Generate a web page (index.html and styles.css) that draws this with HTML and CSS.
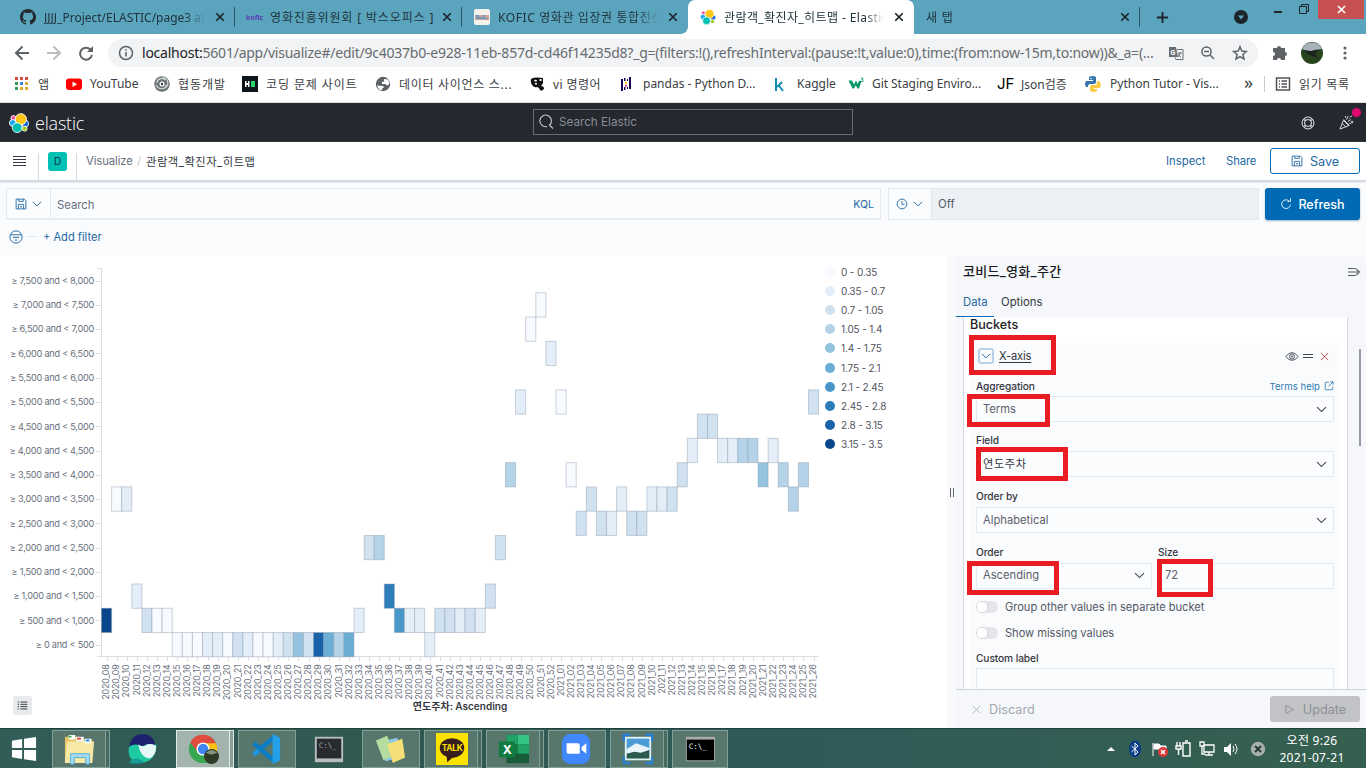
FILE: index.html
```html
<!DOCTYPE html>
<html lang="ko">
<head>
<meta charset="utf-8">
<title>관람객_확진자_히트맵 - Elastic</title>
<link rel="stylesheet" href="styles.css">
</head>
<body>
<svg width="0" height="0" class="defs">
  <symbol id="elastic" viewBox="0 0 32 32"><g stroke="#fff" stroke-width="1.4"><circle cx="7" cy="8" r="4" fill="#f04e98"/><circle cx="6" cy="16" r="5.4" fill="#1ba9f5"/><circle cx="26" cy="17" r="5.4" fill="#0b64dd"/><circle cx="25" cy="25" r="4" fill="#93c90e"/><circle cx="19" cy="10" r="9" fill="#fec514"/><circle cx="13" cy="23.500" r="7.800" fill="#00bfb3"/></g></symbol>
  <symbol id="down" viewBox="0 0 16 16"><path d="M2.500 5 8 10.500 13.500 5" fill="none" stroke="currentColor" stroke-width="1.300"/></symbol>
  <symbol id="close" viewBox="0 0 16 16"><path d="m3 3 10 10M13 3 3 13" fill="none" stroke="currentColor" stroke-width="2.300"/></symbol>
  <symbol id="thinx" viewBox="0 0 16 16"><path d="m1.500 1.500 13 13M14.500 1.500l-13 13" fill="none" stroke="currentColor" stroke-width="1.400"/></symbol>
  <symbol id="disk" viewBox="0 0 16 16"><path d="M2 1.500h10.500l2 2v11H1.500v-13H2m3 0v3h6v-3M4.500 14.500v-6h7v6M8 10.500v2m-1-1h2" fill="none" stroke="currentColor" stroke-width="1.200"/></symbol>
</svg>
<div class="screen">
  <div class="tabs">
    <div class="tab t1"><svg class="i16" viewBox="0 0 16 16"><path fill="#24292e" d="M8 0C3.580 0 0 3.580 0 8c0 3.540 2.290 6.530 5.470 7.590.4.070.55-.17.55-.38v-1.490c-2.230.48-2.690-.95-2.690-.95-.36-.92-.89-1.170-.89-1.170-.73-.5.050-.49.050-.49.8.060 1.230.83 1.230.83.71 1.220 1.870.87 2.330.66.070-.52.280-.87.5-1.070-1.770-.2-3.640-.89-3.640-3.950 0-.87.31-1.590.82-2.150-.08-.2-.36-1.020.08-2.120 0 0 .67-.21 2.200.82a7.600 7.600 0 0 1 4 0c1.530-1.040 2.200-.82 2.200-.82.44 1.100.160 1.920.080 2.120.51.56.82 1.270.82 2.150 0 3.070-1.870 3.750-3.650 3.950.29.25.54.73.54 1.480v2.200c0 .21.150.46.55.38A8 8 0 0 0 8 0"/></svg><span class="tt">JJJJ_Project/ELASTIC/page3 at</span><svg class="x"><use href="#close"/></svg></div>
    <div class="tab t2"><b class="kofic">kofic</b><span class="tt">영화진흥위원회 [ 박스오피스 ]</span><svg class="x"><use href="#close"/></svg></div>
    <div class="tab t3"><svg class="i16" viewBox="0 0 16 16"><rect width="16" height="16" rx="2" fill="#f5f2ed"/><path d="M1 6h14v5H1z" fill="#c9a49a"/><path d="M2 6h3v2h4V6h2v3h3v1H2" fill="#7896b5"/></svg><span class="tt">KOFIC 영화관 입장권 통합전산</span><svg class="x"><use href="#close"/></svg></div>
    <div class="tab t4 active"><svg class="i16"><use href="#elastic"/></svg><span class="tt">관람객_확진자_히트맵 - Elastic</span><svg class="x"><use href="#close"/></svg></div>
    <div class="tab t5"><span class="tt">새 탭</span><svg class="x"><use href="#close"/></svg></div>
    <svg class="plus" viewBox="0 0 14 14"><path d="M7 1v12M1 7h12" stroke="#1c2529" stroke-width="2"/></svg>
    <svg class="tri" viewBox="0 0 14 14"><circle cx="7" cy="7" r="7" fill="#1c2529"/><path d="M4 5.500h6L7 9.500z" fill="#5ba4be"/></svg>
    <svg class="winctl" viewBox="0 0 92 20"><path d="M1 12h8" stroke="#1c2529" stroke-width="2"/><path d="M26.500 6.500h7v7h-7zM28.500 6V4.500h7v7H34" fill="none" stroke="#1c2529"/><path fill="#c75050" d="M45 0h46v19H45z"/><path d="m65 6 7 7m0-7-7 7" stroke="#fff" stroke-width="1.700"/></svg>
  </div>
  <div class="toolbar">
    <svg class="nav" viewBox="0 0 86 16"><g fill="none" stroke-width="2"><path stroke="#5f6368" d="M15 8H2m6.500-6.500L2 8l6.500 6.500"/><path stroke="#babcbe" d="M33 8h13m-6.500-6.500L46 8l-6.500 6.500"/><path stroke="#5f6368" d="M76.500 4.500A6 6 0 1 0 78 10"/></g><path fill="#5f6368" d="M79 1v6h-6z"/></svg>
    <div class="omni"><svg class="i16" viewBox="0 0 16 16"><circle cx="8" cy="8" r="6.500" fill="none" stroke="#5f6368" stroke-width="1.500"/><path d="M8 7v4.500M8 4.200v1.600" stroke="#5f6368" stroke-width="1.600"/></svg><span class="url"><i>localhost:</i>5601/app/visualize#/edit/9c4037b0-e928-11eb-857d-cd46f14235d8?_g=(filters:!(),refreshInterval:(pause:!t,value:0),time:(from:now-15m,to:now))&amp;_a=(...</span>
      <svg class="omnii" viewBox="0 0 80 16"><path fill="#6a6e73" d="M1 2h7l2 10H1z"/><path d="M9 4.500h6v10H8l-1-2M10 8h4m-2-1v1c0 2-1 3-2 4m0-3c1 2 2 3 3 3" fill="none" stroke="#6a6e73"/><text x="2.500" y="10" class="gt">G</text><g fill="none" stroke="#5f6368" stroke-width="1.500"><circle cx="38.500" cy="6.500" r="4.600"/><path d="m42 10 4 4M36 6.500h5M72 1.800l1.800 4.300 4.600.4-3.500 3 1.100 4.500-4-2.400-4 2.400 1.100-4.500-3.500-3 4.600-.4z"/></g></svg></div>
    <svg class="ext" viewBox="0 0 82 24"><path fill="#5f6368" d="M3 7h3a2 2 0 1 1 4 0h4v4a2 2 0 1 1 0 4v4h-4a2 2 0 1 0-4 0H2v-4a2 2 0 1 0 0-4V7z"/><circle cx="41" cy="12" r="11" fill="#28441f"/><path d="M31 8a11 11 0 0 1 20 0l-8 1-4 2z" fill="#a9b2bd"/><path d="m32 9 8 1 9-1-5 3 3 5-6-2-4-2z" fill="#1c221e"/><g fill="#5f6368"><circle cx="74" cy="7" r="1.600"/><circle cx="74" cy="12" r="1.600"/><circle cx="74" cy="17" r="1.600"/></g></svg>
  </div>
  <div class="bookmarks">
    <div class="b1"><svg viewBox="0 0 16 16"><path fill="#d64a3f" d="M1 1h3v3H1zm5 0h3v3H6zm5 0h3v3h-3z"/><path fill="#3b9a5a" d="M1 6h3v3H1zm0 5h3v3H1z"/><path fill="#3f7fdc" d="M6 6h3v3H6z"/><path fill="#e0a92e" d="M11 6h3v3h-3zm-5 5h3v3H6zm5 0h3v3h-3z"/></svg><span>앱</span></div>
    <div class="b2"><svg viewBox="0 0 16 16"><rect y="2.500" width="16" height="11.500" rx="3" fill="#f00"/><path fill="#fff" d="m6.500 5.500 4.500 2.700L6.500 11z"/></svg><span>YouTube</span></div>
    <div class="b3"><svg viewBox="0 0 16 16"><circle cx="8" cy="8" r="7.800" fill="#6d7577"/><path d="M8 2c6-1 8 7 3 10M12 9c0 5-8 5-10 0M3 7c0-4 5-6 8-3" fill="none" stroke="#d3d8d8" stroke-width="1.200"/><circle cx="8" cy="8" r="2.500" fill="#fff"/><circle cx="8" cy="8" r="1.200" fill="#333"/></svg><span>협동개발</span></div>
    <div class="b4"><svg viewBox="0 0 16 16"><path fill="#0c151c" d="M0 0h16v16H0z"/><path fill="#fff" d="M3 5h1.500v2h1.500V5h1.500v6H6V9H4.500v2H3z"/><path fill="#2bd46a" d="M9 5h4v6H9z"/></svg><span>코딩 문제 사이트</span></div>
    <div class="b5"><svg viewBox="0 0 16 16"><circle cx="8" cy="8" r="7.200" fill="#5f6368"/><path fill="#fff" d="M2 9.500 8 10l1 1.500-2 1v1.700Q3 13.500 2 9.500M9 3l4 .5q1.500 2 1.200 4.500l-2 1.500L10 8 7 8V6l2-.5z"/></svg><span>데이터 사이언스 스...</span></div>
    <div class="b6"><svg viewBox="0 0 16 16"><path fill="#111" d="M1 3q2-2 6-1.500L13 2v5q-1 2-2 3 3 0 3 3-3 3-4 1-1-3-3-3-2 1-4-1-3-3-2-7"/><path fill="#fff" d="M4 4q3-1 3 1-2 2-3-1m5 0q2-2 3 0-1 2-3 0M5 7h2v1.500H5z"/></svg><span>vi 명령어</span></div>
    <div class="b7"><svg viewBox="0 0 16 16"><path fill="#150458" d="M2 3h2v12H2zm8-2h2v12h-2zM5 2h1.500v3H5zm0 9h1.500v3H5zM8 3h1v2H8zm0 8h1v2H8z"/><path fill="#ffca00" d="M6 6h2v2H6z"/><path fill="#e70488" d="M6 9h2v1.500H6z"/></svg><span>pandas - Python D...</span></div>
    <div class="b8"><svg viewBox="0 0 16 16"><path d="M3 2v13M9 6l-5 5m1.500-2L10 15" fill="none" stroke="#168cb5" stroke-width="2"/></svg><span>Kaggle</span></div>
    <div class="b9"><svg viewBox="0 0 16 16"><path d="M.5 4.500h3.500l2 4 2-4 1.500 3.500L11 5h2.500L11 12.500H9.500L7.800 9.200 6 12.500H4.500z" fill="#059862"/><path d="M13 2h2l-1 1.500h1v2h-2" fill="none" stroke="#059862" stroke-width=".8"/></svg><span>Git Staging Enviro...</span></div>
    <div class="b10"><b>JF</b><span>Json검증</span></div>
    <div class="b11"><svg viewBox="0 0 16 16"><path fill="#3774a8" d="M4 1q3-2 7 0v5q0 2-2 2H5q-2 0-2 3H1q-2-3 0-6h7V4H4z"/><path fill="#f8cd43" d="M12 5h2q3 3 1 7H9v1h3v2q-3 2-7 0v-4q0-2 2-2h3q2 0 2-3z"/><circle cx="6" cy="2.500" r=".8" fill="#fff"/></svg><span>Python Tutor - Vis...</span></div>
    <div class="more">»</div>
    <div class="b12"><svg viewBox="0 0 16 16"><path d="M1.500 2h13v12h-13zM4 5h1m1.500 0H12M4 8h1m1.500 0H12M4 11h1m1.500 0H12" fill="none" stroke="#50545a" stroke-width="1.500"/></svg><span>읽기 목록</span></div>
  </div>
  <div class="ehead"><svg class="elogo"><use href="#elastic"/></svg><span class="ename">elastic</span>
    <div class="esearch"><svg viewBox="0 0 16 16"><path d="M9 12.500A5.800 5.800 0 1 1 11.500 11.200l3.500 3.300" fill="none" stroke="#c7cad0" stroke-width="1.100"/></svg>Search Elastic</div>
    <svg class="help" viewBox="0 0 16 16" fill="none" stroke="#dfe5ef"><circle cx="8" cy="8" r="6"/><circle cx="8" cy="8" r="3.500"/><path d="m3 4.500 2.500 1.200M4.500 3l1.200 2.500M13 4.500l-2.500 1.200M11.500 3l-1.200 2.500M3 11.500l2.500-1.200M4.500 13l1.200-2.500M13 11.500l-2.500-1.200M11.500 13l-1.200-2.500"/></svg>
    <div class="party"><svg viewBox="0 0 16 16" fill="none" stroke="#dfe5ef"><path d="m5 5-4 10 10-4zM3.500 9l4 4M5 6l5 5M8 5l2-4M9.500 7l3-2M11 9l4-1M7 3V1m5 1 2-1m-1 6h2M11 4h1"/></svg><i></i></div>
  </div>
  <div class="knav"><svg class="burger" viewBox="0 0 14 14"><path d="M0 2.500h13M0 5.500h13M0 8.500h13M0 11.500h13" stroke="#343741" stroke-width="1.200"/></svg><i class="vs"></i><b class="d">D</b><i class="vs v2"></i><span class="vis">Visualize</span><span class="sl">/</span><span class="cur">관람객_확진자_히트맵</span><span class="insp">Inspect</span><span class="share">Share</span><button class="save"><svg><use href="#disk"/></svg>Save</button></div>
  <div class="query">
    <div class="qrow">
      <div class="qbox"><div class="qsave"><svg class="a"><use href="#disk"/></svg><svg class="b"><use href="#down"/></svg></div><span class="qs">Search</span><span class="kql">KQL</span></div>
      <div class="date"><div class="clock"><svg class="a" viewBox="0 0 16 16"><path d="M8 1.500a6.500 6.500 0 1 0 0 13 6.500 6.500 0 0 0 0-13M8 4v4.500h3.500" fill="none" stroke="currentColor" stroke-width="1.200"/></svg><svg class="b"><use href="#down"/></svg></div><span>Off</span></div>
      <button class="refresh"><svg viewBox="0 0 16 16"><path d="M12 4A5.800 5.800 0 1 0 13.800 9M10 4.500h4v-4" fill="none" stroke="#fff" stroke-width="1.200"/></svg>Refresh</button>
    </div>
    <div class="frow"><svg viewBox="0 0 16 16"><path d="M8 1a7 7 0 1 0 0 14A7 7 0 0 0 8 1M2 5.500h12M4.500 8.500h7M6.500 11.500h3" fill="none" stroke="currentColor" stroke-width="1.100"/></svg><i></i><span>+ Add filter</span></div>
  </div>
  <div class="main">
    <div class="vispane"><svg id="chart" width="820" height="472" viewBox="0 256 820 472"></svg>
      <div class="legend" id="legend"></div>
      <div class="toggle"><svg viewBox="0 0 16 16"><path d="M1 3h2m2 0h10M1 6.300h2m2 0h10M1 9.600h2m2 0h10M1 13h2m2 0h10" stroke="#343741" stroke-width="1.400"/></svg></div>
    </div>
    <div class="gutter"><i></i></div>
    <div class="panel">
      <div class="ptitle"><span>코비드_영화_주간</span><svg viewBox="0 0 16 14"><path d="M1 3h9M1 7h12M1 11h9M10.500 3.500 14.500 7l-4 3.500" fill="none" stroke="#535966" stroke-width="1.200"/></svg></div>
      <div class="ptabs"><span class="on">Data</span><span>Options</span></div>
      <div class="pbody">
        <div class="card"><h3>Buckets</h3>
          <div class="inner">
            <div class="axis"><span class="acc"><svg><use href="#down"/></svg></span><u>X-axis</u><svg class="eye" viewBox="0 0 18 14" fill="none" stroke="#404450" stroke-width="1.100"><path d="M1 7q8-10 16 0-8 10-16 0z"/><circle cx="9" cy="7" r="3.300"/><circle cx="9" cy="7" r="1"/></svg><svg class="grab" viewBox="0 0 10 6"><path d="M0 1.500h10M0 4.500h10" stroke="#404450" stroke-width="1.200"/></svg><svg class="del"><use href="#thinx"/></svg></div>
            <div class="lab l1"><b>Aggregation</b><span>Terms help <svg viewBox="0 0 12 12"><path d="M6 1.500H2.500q-1 0-1 1v7q0 1 1 1h7q1 0 1-1V6.500M7.500 1h3.500v3.500M11 1 5.500 6.500" fill="none" stroke="currentColor"/></svg></span></div>
            <div class="inp">Terms<svg><use href="#down"/></svg></div>
            <div class="lab l2"><b>Field</b></div>
            <div class="inp kr"><span>연도주차</span><svg><use href="#down"/></svg></div>
            <div class="lab l3"><b>Order by</b></div>
            <div class="inp">Alphabetical<svg><use href="#down"/></svg></div>
            <div class="two"><div><div class="lab l4"><b>Order</b></div><div class="inp">Ascending<svg><use href="#down"/></svg></div></div><div><div class="lab l4"><b>Size</b></div><div class="inp">72</div></div></div>
            <div class="sw s1"><i></i>Group other values in separate bucket</div>
            <div class="sw"><i></i>Show missing values</div>
            <div class="lab l5"><b>Custom label</b></div>
            <div class="inp last"></div>
          </div>
        </div>
        <i class="scroll"></i>
      </div>
      <div class="pfoot"><svg><use href="#thinx"/></svg><span>Discard</span><button><svg viewBox="0 0 12 12"><path d="M2 1.500 10.500 6 2 10.500z" fill="none" stroke="currentColor"/></svg>Update</button></div>
    </div>
    <i class="mark m1"></i><i class="mark m2"></i><i class="mark m3"></i><i class="mark m4"></i><i class="mark m5"></i>
  </div>
  <div class="taskbar">
    <div class="app w52"><svg class="start" viewBox="0 0 28 28"><path fill="#fff" d="M1 5l11-1.700V13H1zm13-2L27 1v12H14zM1 15h11v9.700L1 23zm13 0h13v12l-13-2z"/></svg></div>
    <div class="app run dbl"><svg viewBox="0 0 36 34"><path fill="#e6c564" d="M2 4h13l2 3h14v25H2z"/><path fill="#f8e8a6" d="M4 9h29l-2 23H2z"/><path fill="#fff" d="M6 2h7v5H6zm8 2h8v5h-8zm9 2h7v5h-7z"/><path fill="#4caf50" d="M6 3h3v2H6z"/><path fill="#e53935" d="M15 5h4v2h-4z"/><path fill="#1e88e5" d="M24 7h4v2h-4z"/><path d="M8 33V22h20v11h-4v-7H12v7z" fill="#a6ddf4" stroke="#55aed4"/></svg></div>
    <div class="app w66"><svg viewBox="0 0 36 34"><path fill="#1ec8a0" d="M4 12Q0 24 8 30 16 34 25 29q8-6 7-17l-8-5z"/><path fill="#1d2170" d="M3 15Q6 1 18 1q12 1 13 12-4-1-9-1-4 3-8 1-7-2-11 2z"/><path fill="#e6f7f5" d="M13 12q4 4 10 0 6-1 9 2 0 10-7 13-10-1-12-15z"/><path fill="#159a96" d="M3 32q2-5 9-5l8 4q-7 3-17 1z"/></svg></div>
    <div class="app run dbl cur"><svg viewBox="0 0 36 34"><circle cx="17" cy="17" r="15" fill="#36a852"/><path fill="#df4b3e" d="M3.500 10A15 15 0 0 1 31 12H17l-6 8z"/><path fill="#fbc116" d="M17 11h14q4 12-8 20l-4-2z"/><circle cx="17" cy="17" r="7" fill="#fff"/><circle cx="17" cy="17" r="5.500" fill="#4285f4"/><circle cx="26" cy="25" r="8" fill="#2d3a26"/><path d="M20 21q6-6 12 0l-6 2z" fill="#899484"/></svg></div>
    <div class="app run g"><svg viewBox="0 0 36 34"><path d="M5 11 26 29M5 23 26 5" stroke="#0b7dc4" stroke-width="5"/><path d="m5 23 5-4.500" stroke="#2196dd" stroke-width="5"/><path fill="#24a0ea" d="m25 1 8 4v24l-8 4z"/></svg></div>
    <div class="app w66"><svg viewBox="0 0 36 34"><path fill="#b9bcbe" d="M3 4h30v27H3z"/><path fill="#282b2e" d="M5 6h26v21H5z"/><text x="7" y="16" class="cm dim">C:\_</text></svg></div>
    <div class="app run"><svg viewBox="0 0 36 34"><path fill="#8cc7ea" d="m9 9 17-4 4 21-17 4z"/><path fill="#b5dda0" d="M3 8 15 3l8 21-12 5z"/><path fill="#f4df79" d="m15 12 16-6 3 20-13 6z"/></svg></div>
    <div class="app run dbl g"><svg viewBox="0 0 36 34"><path fill="#fae100" d="M1 0h34v34H1z"/><ellipse cx="18" cy="16" rx="13" ry="10.500" fill="#371d1e"/><path fill="#371d1e" d="m12 23 1 8 8-7z"/><text x="7" y="19.500" class="talk">TALK</text></svg></div>
    <div class="app run dbl g"><svg viewBox="0 0 36 34"><path fill="#185c37" d="M10 2h24v30H10z"/><path fill="#21a366" d="M10 2h12v10H10z"/><path fill="#33c481" d="M22 2h12v10H22z"/><path fill="#107c41" d="M10 12h12v10H10z"/><path fill="#21a366" d="M22 12h12v10H22z"/><path fill="#107c41" d="M2 9h17v17H2z"/><text x="6" y="22" class="ex">X</text></svg></div>
    <div class="app run g"><svg viewBox="0 0 36 34"><rect x="3" y="1" width="30" height="32" rx="9" fill="#4087fc"/><path fill="#fff" d="M8 11h12q2 0 2 3v8H10q-2 0-2-3zm16 4 5-4v11l-5-4z"/></svg></div>
    <div class="app run dbl g"><svg viewBox="0 0 36 34"><path fill="#e1f1f7" d="M4 4h28v25H4z"/><path fill="#4b9bd5" d="M6 6h24v16H6z"/><path fill="#e7f5fb" d="m6 17 10-6 14 5v6H6z"/><path fill="#28594b" d="m6 22 8-2 7 1 9-3v9H6z"/><path d="M3 9V2h7M26 2h7v7M33 25v7h-7M10 32H3v-7" fill="none" stroke="#2681d5" stroke-width="2.500"/></svg></div>
    <div class="app run g last"><svg viewBox="0 0 36 34"><path fill="#aaa" d="M3 4h31v26H3z"/><path fill="#000" d="M4 7h29v22H4z"/><text x="6" y="17" class="cm">C:\_</text></svg></div>
    <svg class="tray" viewBox="0 0 164 20"><path fill="#fff" d="m1 12 4-4 4 4z"/><ellipse cx="29" cy="10" rx="6" ry="8.500" fill="#0a3d86"/><path d="m25.500 7 6.500 6-3 3V4l3 3-6.500 6" fill="none" stroke="#fff"/><path d="M47 4v13M48 5h5l2 2h5v5h-5l-2-2h-5z" fill="#fff" stroke="#fff"/><circle cx="57" cy="13" r="5" fill="#df3737"/><path d="m55 11 4 4m0-4-4 4" stroke="#fff" stroke-width="1.500"/><path d="M77 4h7v13h-7zM79 2h3M71 3v4m3-4v4m-4 0h5v3h-5zm2.500 3v6" fill="none" stroke="#fff" stroke-width="1.400"/><path d="M98 6h10v7H98zm5 7v3m-4 0h8M94 3h4v4h-4zm2 4v8h3" fill="none" stroke="#fff" stroke-width="1.300"/><path fill="#fff" d="M118 8h3l4-4v13l-4-4h-3z"/><path d="M127 7q2 3 0 6m2-8q4 5 0 10" fill="none" stroke="#fff"/><circle cx="152" cy="10" r="7.200" fill="#a8b0ad"/><path d="m149 7 6 6m0-6-6 6" stroke="#263d36" stroke-width="2"/></svg>
    <div class="time"><span>오전 9:26</span><span>2021-07-21</span></div>
  </div>
</div>
<script src="chart.js"></script>
</body>
</html>
```
FILE: styles.css
```css
*{box-sizing:border-box}
body{margin:0;background:#fff;width:1370px;height:768px;overflow:hidden}
.defs{position:absolute}
.screen{width:1366px;height:768px;display:flex;flex-direction:column;font-family:Inter,"Noto Sans CJK KR",sans-serif;font-size:12px;color:#343741;overflow:hidden}
.screen>div{flex:none}
svg{display:block;flex:none}
i{font-style:normal}
button{font:inherit;border:0;padding:0;margin:0;display:flex;align-items:center;justify-content:center}
.i16{width:16px;height:16px}
.tabs,.bookmarks,.toolbar,.time{font-family:"Noto Sans","Noto Sans CJK KR",sans-serif}
.tabs{height:34px;background:#5ba4be;display:flex;font-size:12px;color:#20343c}
.tab{display:flex;align-items:center;height:34px;padding:0 9px 0 0}
.tab .tt{flex:1;min-width:0;overflow:hidden;white-space:nowrap;margin-left:8px;margin-right:9px;-webkit-mask-image:linear-gradient(90deg,#000 88%,transparent);mask-image:linear-gradient(90deg,#000 88%,transparent)}
.tab .x{width:12px;height:12px;color:#1c2529}
.t1{width:235px;padding-left:20px}.t2{width:227px;padding-left:11px}.t3{width:226px;padding-left:12px}.t4{width:226px;padding-left:12px}.t5{width:226px;padding-left:4px}
.t1,.t2,.t5{background:linear-gradient(#2b5668,#2b5668) right 7px/1px 20px no-repeat}
.t2 .tt{letter-spacing:.85px;margin-right:0}.tab.t2 .tt{-webkit-mask:none;mask:none}.t3 .tt{letter-spacing:.6px}.t4 .tt{letter-spacing:.4px}.t5 .tt{letter-spacing:.8px}
.t3{position:relative}
.t3::after{content:"";position:absolute;right:0;bottom:0;width:7px;height:7px;background:radial-gradient(circle at 0 0,transparent 6.500px,#fff 7px)}
.kofic{width:16px;font:bold 7px "Noto Sans";color:#5a3fb4}
.active{background:#fff;border-radius:7px 7px 0 0}
.plus{width:13px;height:13px;margin:11px 0 0 16px}.tri{width:14px;height:14px;margin:10px 0 0 65px}.winctl{width:92px;height:20px}
.tri+.winctl{margin-left:25px}
.toolbar{height:37px;display:flex;align-items:center}
.nav{width:86px;height:16px;margin-left:14px}
.omni{width:1150px;height:28px;border-radius:14px;background:#f1f3f4;margin-left:8px;display:flex;align-items:center;padding-left:10px}
.url{font-size:14px;color:#686c71;margin-left:8px;width:1022px;white-space:nowrap;letter-spacing:-.235px}
.url i{color:#202124}
.omnii{width:80px;height:16px;margin-left:4px}.gt{font:bold 7px Roboto;fill:#fff}
.ext{width:82px;height:24px;margin-left:13px}
.bookmarks{height:32px;display:flex;align-items:center;padding-left:14px;color:#3c4043;border-bottom:1px solid #dcdde0;padding-bottom:6px}
.bookmarks>div{display:flex;align-items:center;white-space:nowrap}
.bookmarks svg,.bookmarks b{width:16px;height:16px;margin-right:8px}
.bookmarks b{font:15px/16px Inter;color:#000}
.b1{width:52px}.b2{width:88px}.b3{width:88px;letter-spacing:1px}.b4{width:133px;letter-spacing:.9px}.b5{width:155px;letter-spacing:.7px}.b6{width:89px;letter-spacing:.4px}.b6 span{margin-left:-1px}.b7{width:154px}.b8{width:75px}.b9{width:149px}.b10{width:88px}.b11{width:159px}.more{width:20px;font-size:18px;line-height:14px;padding-bottom:3px}.b12{border-left:1px solid #c8cacc;padding-left:10px;height:16px;letter-spacing:.7px}
.b11 span{margin-left:1px}.b9 span{letter-spacing:-.05px}
.ehead{height:39px;background:#25282f;display:flex;align-items:center;color:#fff}
.elogo{width:20px;height:20px;margin-left:9px}
.ename{font:300 18px "Open Sans";width:56px;margin-left:6px;letter-spacing:-.2px}
.esearch{width:320px;height:26px;border:1px solid #696c73;margin-left:442px;display:flex;align-items:center;color:#888c94;font-size:11.700px;margin-bottom:1px}
.esearch svg{width:16px;height:16px;margin:0 5px 0 4px}
.help{width:16px;height:16px;margin-left:447px}
.party{position:relative;margin-left:23px}.party svg{width:15px;height:15px}.party i{position:absolute;left:13px;top:-7px;width:9px;height:9px;border-radius:5px;background:#dd0a73}
.knav{height:39px;display:flex;align-items:center;border-bottom:1px solid #d3dae6;font-size:11.300px;box-shadow:0 1px 2px #c5cbd6;position:relative}
.burger{width:14px;height:14px;margin-left:13px}
.vs{width:1px;height:27px;background:#d3dae6;align-self:flex-end;margin-left:11px}.v2{margin-left:9px}
.d{width:19px;height:19px;border-radius:3px;background:#00bfb3;margin-left:9px;font:10px/19px Inter;text-align:center;color:#14343b}
.vis{color:#69707d;width:50px;margin-left:9px;letter-spacing:-.1px}.sl{color:#c5cad3;margin-right:5px;margin-left:1px}
.knav .cur{width:1020px;color:#343741;font-size:11.300px;letter-spacing:.5px}.insp,.share{color:#2569a3}.insp{width:60px}.share{width:44px;letter-spacing:-.15px}
.save{width:90px;height:26px;border:1px solid #006bb4;border-radius:3px;background:#fff;color:#2569a3;font-size:12.700px}
.save svg{width:12px;height:12px;margin-right:7px}
.query{height:75px;background:#fafbfd}
.qrow{display:flex;padding:7px 0 0 6px;color:#2569a3}
.qbox{width:875px;height:32px;border:1px solid #e5e8ee;border-bottom:2px solid #e8ebf0;display:flex;align-items:center;background:#fbfcfd}
.qsave{width:44px;height:100%;border-right:1px solid #e5e8ee;display:flex;align-items:center;padding-left:8px}
.a{width:12px;height:12px}.b{width:12px;height:12px;margin-left:4px}
.qs{flex:1;color:#69707d;margin-left:6px;font-size:11.300px;padding-top:2px}.kql{margin-right:6px;font-size:10.600px;padding-top:1px}
.date{width:371px;height:32px;border:1px solid #e5e8ee;margin-left:7px;display:flex;align-items:center;background:#edf0f5;color:#535966;font-size:11.300px}
.clock{width:43px;height:100%;background:#fbfcfd;border-right:1px solid #e0e4ea;display:flex;align-items:center;padding-left:7px;color:#2569a3;margin-right:6px}
.refresh{width:95px;height:32px;background:#006bb4;color:#fff;border-radius:3px;margin-left:6px;font-size:12.500px;font-weight:500;box-shadow:0 1px 2px #a0b7ca}
.refresh svg{width:12px;height:12px;margin-right:6px}
.frow{display:flex;align-items:center;color:#2569a3;height:33px;padding-left:9px;font-size:11.100px}
.frow svg{width:14px;height:14px}.frow i{width:10px;height:1px;background:#e3e7ed;margin:0 10px 0 3px}.frow span{margin-left:-3px}
.main{height:472px;display:flex;position:relative}
.vispane{width:947px;display:flex;position:relative}
.legend{padding:6px 0 0 5px;font-size:10px;color:#50545f;letter-spacing:-.15px}
.legend div{display:flex;align-items:center;height:19.200px}.legend i{width:10px;height:10px;border-radius:5px;margin-right:6px}
.toggle{position:absolute;left:13px;top:440px;width:19px;height:19px;border-radius:3px;background:#e9eaee;padding:4px}.toggle svg{width:11px;height:11px}
.gutter{width:9px;background:#f9fafc;display:flex;align-items:center;justify-content:center}
.gutter i{width:4px;height:9px;border:solid #60636c;border-width:0 1px}
.panel{width:410px;background:#f5f7fa;display:flex;flex-direction:column}
.ptitle{height:29px;display:flex;align-items:center;justify-content:space-between;padding:0 5px 0 7px;font-size:13px;color:#1a1c21;font-weight:500;letter-spacing:.3px}.ptitle span{margin-top:-1px}.ptitle svg{width:14px;height:12px;margin-top:2px}
.ptabs{height:32px;display:flex;font-size:11.300px;line-height:34px}
.ptabs span{padding:0 6px 0 7px}.ptabs .on{color:#2569a3;border-bottom:1px solid #006bb4;width:38px}
.pbody{height:372px;display:flex;overflow:hidden}
.card{width:385px;height:390px;margin-left:7px;background:#fff;border:solid #d3dae6;border-width:0 1px;padding:0 7px 0 6px}
.card h3{font-size:12.600px;font-weight:500;color:#1a1c21;margin:0;height:26px;line-height:15px}
.inner{background:#fafbfd;height:360px;padding:0 6px;font-size:11.200px}
.axis{display:flex;height:26px;align-items:center}
.acc{width:16px;height:16px;border:2px solid #b7d2e6;border-radius:3px;margin-left:2px;color:#2569a3;display:flex;align-items:center;justify-content:center}.acc svg{width:12px;height:12px}.axis u{margin-left:5px;flex:1;text-underline-offset:2px;letter-spacing:-.2px}
.eye{width:14px;height:11px}.grab{width:10px;height:6px;margin-left:4px}.del{width:9px;height:9px;margin:0 5px 0 7px;color:#bd271e}
.lab{display:flex;justify-content:space-between;align-items:center;font-size:10.200px;height:16px}.lab b{font-weight:500;color:#343741;letter-spacing:-.1px}.lab span{display:flex;align-items:center;color:#2e7bb5;font-size:9.600px;gap:4px}.lab span svg{width:10px;height:10px}
.l1{margin-top:9px;margin-bottom:2px}.l2{margin-top:10px;margin-bottom:3px}.l3{margin-top:10px;margin-bottom:4px;padding-top:2px}.l4{margin-top:11px;margin-bottom:3px}.l5{margin-top:4px;margin-bottom:2px}
.inp{height:26px;border:1px solid #e5e9ef;background:#fbfcfd;display:flex;align-items:center;justify-content:space-between;padding:0 5px 0 6px;color:#5b606b;font-size:11.200px}.inp svg{width:13px;height:13px;color:#404450}
.kr{color:#343741}.kr span{margin-top:-3px;letter-spacing:.6px}.two{display:flex;gap:6px}.two>div{flex:1}.two .inp{padding-bottom:2px}
.sw{height:26px;display:flex;align-items:center;font-size:11.100px;color:#535966;letter-spacing:-.02px}.sw i{width:22px;height:12px;border-radius:6px;background:radial-gradient(circle at 6px 6px,#fff 5px,#d3d6dd 5.500px,#e4e6eb 6.500px);margin-right:7px}.s1{margin-top:5px}
.last{border-bottom:0}
.scroll{width:2px;height:97px;background:#989ba5;margin:32px 0 0 11px}
.pfoot{height:39px;border-top:1px solid #ccd4e0;display:flex;align-items:center;padding:0 6px 0 16px;color:#a2a6ae;font-size:12.700px}.pfoot>svg{width:9px;height:9px}.pfoot span{margin-left:8px;flex:1}.pfoot button{width:90px;height:26px;border-radius:3px;background:#c2c3c6;color:#8e9096}.pfoot button svg{width:11px;height:11px;margin-right:8px}
.mark{position:absolute;border:5px solid #e81c23}
.m1{left:969px;top:79px;width:87px;height:40px}.m2{left:967px;top:138px;width:83px;height:33px}.m3{left:976px;top:191px;width:92px;height:34px}.m4{left:967px;top:305px;width:92px;height:34px}.m5{left:1157px;top:303px;width:56px;height:38px}
.taskbar{height:40px;background:linear-gradient(90deg,#315c57,#2f5850 30%,#305a59 60%,#35604f);display:flex;align-items:center;border-top:1px solid #1e413b}
.app{width:62px;height:38px;display:flex;align-items:center;justify-content:flex-start;padding-left:10px}
.app svg{width:34px;height:32px}
.w52{width:52px;padding-left:10px}.app .start{width:28px;height:26px}.w66{padding-left:12px;width:62px}
.run{width:58px;border:1px solid #82a098;background:#57776d;margin-right:4px}
.dbl{box-shadow:inset -3px 0 #456a60,inset -4px 0 #82a098}
.cur.run{background:#a2b4ad;border-color:#e3ebe6;box-shadow:inset -3px 0 #88a097,inset -4px 0 #e3ebe6}
.last.run{margin:0;width:56px}
.cm{font:8px "DejaVu Sans Mono";fill:#fff}.dim{fill:#a4a7a9}.talk{font:bold 9px Inter;letter-spacing:-.3px;fill:#fae100}.ex{font:bold 13px Inter;fill:#fff}
.tray{width:164px;height:20px;margin-left:378px}
.time{width:80px;display:flex;flex-direction:column;align-items:center;color:#fff;font-size:12px;line-height:17px;margin-left:2px;letter-spacing:.25px}
.ax{font:9.200px Inter;letter-spacing:-.27px;fill:#69707d}.xl{font:8.900px Inter;letter-spacing:-.15px;fill:#69707d}.xt{font:600 10px Inter,"Noto Sans CJK KR";fill:#343741}
```
FILE: chart.js
```js
const colors = ['#f7fbff','#e3eef8','#d0e1f0','#b4d3e8','#94c3df','#6aadd5','#4996c9','#2e7dbb','#1762a9','#08468b'];
const ranges = ['0 - 0.35','0.35 - 0.7','0.7 - 1.05','1.05 - 1.4','1.4 - 1.75','1.75 - 2.1','2.1 - 2.45','2.45 - 2.8','2.8 - 3.15','3.15 - 3.5'];
// One entry per week: row * 10 + colour index
const cells = [19,60,61,21,12,10,10,0,0,0,1,1,0,2,1,0,0,1,2,4,2,8,5,3,5,11,42,43,27,16,11,11,1,12,12,11,12,11,22,42,73,101,130,140,121,100,70,52,62,52,51,61,52,52,61,61,62,72,81,92,92,81,81,83,83,74,81,73,63,73,102];
const x0 = 101.5, bottom = 656.8, cw = 10.1, rh = 24.27;
let s = '<path d="M101.5 268.500V656.500H819M97 268.500h4.500M97 656.500h4.500" fill="none" stroke="#dcdde0"/>';
for (let r = 0; r < 16; r++) {
  const y = bottom - rh * (r + .5), lo = (r * 500).toLocaleString('en-US'), hi = ((r + 1) * 500).toLocaleString('en-US');
  s += `<path d="M96 ${Math.round(y) + .5}h5" stroke="#dcdde0"/><text class="ax" x="94" y="${y + 3.3}" text-anchor="end">≥ ${lo} and &lt; ${hi}</text>`;
}
cells.forEach((c, i) => {
  const row = Math.floor(c / 10), x = x0 + i * cw, cx = x + cw / 2;
  const name = i < 45 ? '2020_' + String(i + 8).padStart(2, '0') : '2021_' + String(i - 44).padStart(2, '0');
  s += `<rect x="${x}" y="${bottom - rh * (row + 1)}" width="${cw}" height="${rh}" fill="${colors[c % 10]}" stroke="#8796a8" stroke-opacity=".42"/>`;
  s += `<path d="M${Math.round(cx) + .5} 657v4" stroke="#dcdde0"/><text class="xl" transform="translate(${cx + 2.7} 664.5) rotate(-90)" text-anchor="end">${name}</text>`;
});
s += '<text class="xt" x="460" y="710" text-anchor="middle">연도주차: Ascending</text>';
document.getElementById('chart').innerHTML = s;
document.getElementById('legend').innerHTML = ranges.map((t, i) => `<div><i style="background:${colors[i]}"></i>${t}</div>`).join('');
```
